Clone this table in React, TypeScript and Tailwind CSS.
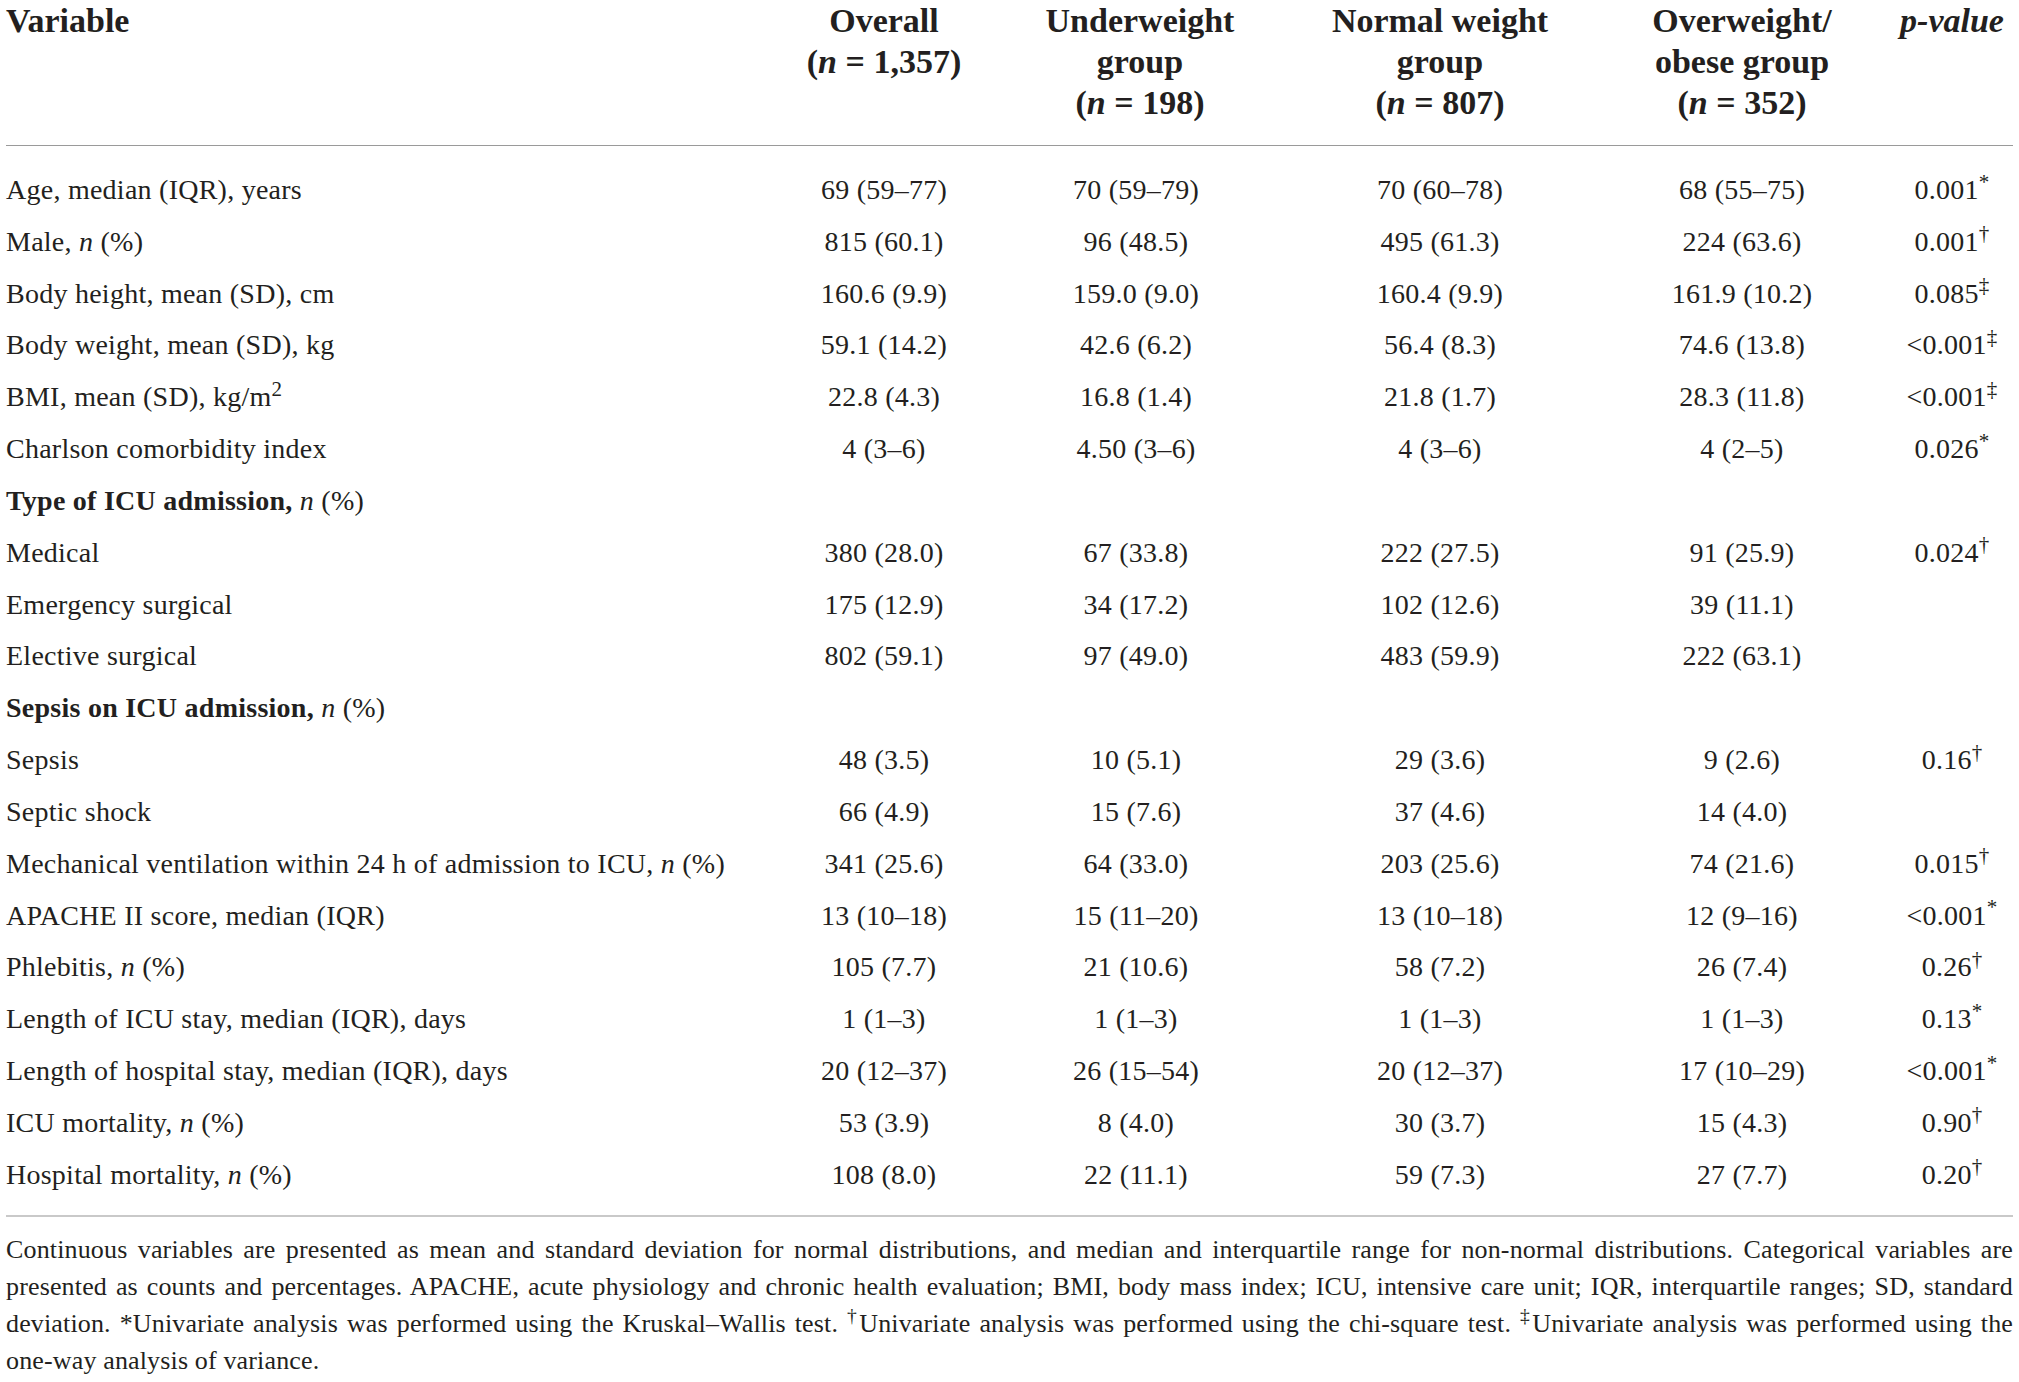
import React from 'react';

type Row = {
  label: React.ReactNode;
  values?: string[];
  p?: string;
  mark?: string;
  section?: boolean;
};

const N = () => <i>n</i>;

const ROWS: Row[] = [
  { label: 'Age, median (IQR), years', values: ['69 (59–77)', '70 (59–79)', '70 (60–78)', '68 (55–75)'], p: '0.001', mark: '*' },
  { label: <>Male, <N /> (%)</>, values: ['815 (60.1)', '96 (48.5)', '495 (61.3)', '224 (63.6)'], p: '0.001', mark: '†' },
  { label: 'Body height, mean (SD), cm', values: ['160.6 (9.9)', '159.0 (9.0)', '160.4 (9.9)', '161.9 (10.2)'], p: '0.085', mark: '‡' },
  { label: 'Body weight, mean (SD), kg', values: ['59.1 (14.2)', '42.6 (6.2)', '56.4 (8.3)', '74.6 (13.8)'], p: '<0.001', mark: '‡' },
  { label: <>BMI, mean (SD), kg/m<sup>2</sup></>, values: ['22.8 (4.3)', '16.8 (1.4)', '21.8 (1.7)', '28.3 (11.8)'], p: '<0.001', mark: '‡' },
  { label: 'Charlson comorbidity index', values: ['4 (3–6)', '4.50 (3–6)', '4 (3–6)', '4 (2–5)'], p: '0.026', mark: '*' },
  { label: <><b>Type of ICU admission,</b> <N /> (%)</>, section: true },
  { label: 'Medical', values: ['380 (28.0)', '67 (33.8)', '222 (27.5)', '91 (25.9)'], p: '0.024', mark: '†' },
  { label: 'Emergency surgical', values: ['175 (12.9)', '34 (17.2)', '102 (12.6)', '39 (11.1)'] },
  { label: 'Elective surgical', values: ['802 (59.1)', '97 (49.0)', '483 (59.9)', '222 (63.1)'] },
  { label: <><b>Sepsis on ICU admission,</b> <N /> (%)</>, section: true },
  { label: 'Sepsis', values: ['48 (3.5)', '10 (5.1)', '29 (3.6)', '9 (2.6)'], p: '0.16', mark: '†' },
  { label: 'Septic shock', values: ['66 (4.9)', '15 (7.6)', '37 (4.6)', '14 (4.0)'] },
  { label: <>Mechanical ventilation within 24 h of admission to ICU, <N /> (%)</>, values: ['341 (25.6)', '64 (33.0)', '203 (25.6)', '74 (21.6)'], p: '0.015', mark: '†' },
  { label: 'APACHE II score, median (IQR)', values: ['13 (10–18)', '15 (11–20)', '13 (10–18)', '12 (9–16)'], p: '<0.001', mark: '*' },
  { label: <>Phlebitis, <N /> (%)</>, values: ['105 (7.7)', '21 (10.6)', '58 (7.2)', '26 (7.4)'], p: '0.26', mark: '†' },
  { label: 'Length of ICU stay, median (IQR), days', values: ['1 (1–3)', '1 (1–3)', '1 (1–3)', '1 (1–3)'], p: '0.13', mark: '*' },
  { label: 'Length of hospital stay, median (IQR), days', values: ['20 (12–37)', '26 (15–54)', '20 (12–37)', '17 (10–29)'], p: '<0.001', mark: '*' },
  { label: <>ICU mortality, <N /> (%)</>, values: ['53 (3.9)', '8 (4.0)', '30 (3.7)', '15 (4.3)'], p: '0.90', mark: '†' },
  { label: <>Hospital mortality, <N /> (%)</>, values: ['108 (8.0)', '22 (11.1)', '59 (7.3)', '27 (7.7)'], p: '0.20', mark: '†' },
];

const COLS = 'grid grid-cols-[752px_252px_252px_356px_248px_147px]';

function HeaderRow() {
  return (
    <div className={`${COLS} text-[34px] font-bold leading-[41px] pb-[22px] border-b border-[#9a9a9a]`}>
      <div>Variable</div>
      <div className="text-center">
        Overall
        <br />(<i>n</i> = 1,357)
      </div>
      <div className="text-center pl-[8px]">
        Underweight
        <br />group
        <br />(<i>n</i> = 198)
      </div>
      <div className="text-center">
        Normal weight
        <br />group
        <br />(<i>n</i> = 807)
      </div>
      <div className="text-center">
        Overweight/
        <br />obese group
        <br />(<i>n</i> = 352)
      </div>
      <div className="text-center pl-[25px]">
        <i>p-value</i>
      </div>
    </div>
  );
}

function BodyRow({ row }: { row: Row }) {
  return (
    <div className={`${COLS} h-[51.84px] leading-[51.84px] whitespace-nowrap`}>
      <div>{row.label}</div>
      {row.section ? null : (
        <>
          {row.values!.map((v, i) => (
            <div key={i} className="text-center">
              {v}
            </div>
          ))}
          <div className="text-center pl-[25px]">
            {row.p}
            {row.mark && <sup>{row.mark}</sup>}
          </div>
        </>
      )}
    </div>
  );
}

export default function App() {
  return (
    <div className="w-[2019px] min-h-screen bg-white px-[6px] font-['Liberation_Serif',serif] text-[#231f20]">
      <HeaderRow />

      {/* table body */}
      <div className="pt-[18px] pb-[14px] text-[28px] tracking-[0.25px] border-b-2 border-[#c9c9c9]">
        {ROWS.map((r, i) => (
          <BodyRow key={i} row={r} />
        ))}
      </div>

      {/* footnote, each line justified to the full width */}
      <div className="pt-[14px] text-[26px] tracking-[0.15px] leading-[37.3px] whitespace-nowrap">
        <div className="text-justify [text-align-last:justify]">
          Continuous variables are presented as mean and standard deviation for normal distributions, and median and interquartile range for non-normal distributions. Categorical variables are
        </div>
        <div className="text-justify [text-align-last:justify]">
          presented as counts and percentages. APACHE, acute physiology and chronic health evaluation; BMI, body mass index; ICU, intensive care unit; IQR, interquartile ranges; SD, standard
        </div>
        <div className="text-justify [text-align-last:justify]">
          deviation. *Univariate analysis was performed using the Kruskal–Wallis test. <sup>†</sup>Univariate analysis was performed using the chi-square test. <sup>‡</sup>Univariate analysis was performed using the
        </div>
        <div>one-way analysis of variance.</div>
      </div>
    </div>
  );
}
